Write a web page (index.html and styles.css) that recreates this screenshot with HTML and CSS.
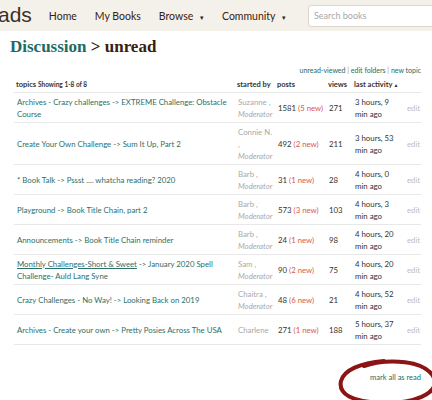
FILE: index.html
```html
<!DOCTYPE html>
<html lang="en">

<head>
    <meta charset="UTF-8">
    <meta name="viewport" content="width=device-width, initial-scale=1.0">
    <title>Discussion &gt; unread</title>
    <link rel="stylesheet" href="styles.css">
</head>

<body>
    <div id="topbar">
        <span class="logo">ads</span>
        <div id="menu">
            <a class="menuItem">Home</a>
            <a class="menuItem">My Books</a>
            <a class="menuItem">Browse <span class="caret">&#9662;</span></a>
            <a class="menuItem">Community <span class="caret">&#9662;</span></a>
        </div>
        <div class="search">Search books</div>
    </div>

    <div id="content">
        <h1 class="pageTitle"><a>Discussion</a> &gt; unread</h1>
        <div class="actions">
            <a>unread-viewed</a> | <a>edit folders</a> | <a>new topic</a>
        </div>

        <table class="topicTable">
            <colgroup>
                <col class="cTopic">
                <col class="cStarted">
                <col class="cPosts">
                <col class="cViews">
                <col class="cActivity">
                <col class="cEdit">
            </colgroup>
            <thead>
                <tr>
                    <th>topics <span class="showing">Showing 1-8 of 8</span></th>
                    <th>started by</th>
                    <th>posts</th>
                    <th>views</th>
                    <th>last activity<span class="sortArrow">&#9650;</span></th>
                    <th></th>
                </tr>
            </thead>
            <tbody>
                <tr>
                    <td><a class="topic">Archives - Crazy challenges -&gt; EXTREME Challenge: Obstacle Course</a></td>
                    <td class="author">Suzanne , <i>Moderator</i></td>
                    <td class="posts">1581 <span class="new">(5 new)</span></td>
                    <td>271</td>
                    <td class="activity">3 hours, 9 min ago</td>
                    <td class="edit">edit</td>
                </tr>
                <tr>
                    <td><a class="topic">Create Your Own Challenge -&gt; Sum It Up, Part 2</a></td>
                    <td class="author">Connie N. , <i>Moderator</i></td>
                    <td class="posts">492 <span class="new">(2 new)</span></td>
                    <td>211</td>
                    <td class="activity">3 hours, 53 min ago</td>
                    <td class="edit">edit</td>
                </tr>
                <tr>
                    <td><a class="topic">* Book Talk -&gt; Pssst .... whatcha reading? 2020</a></td>
                    <td class="author">Barb , <i>Moderator</i></td>
                    <td class="posts">31 <span class="new">(1 new)</span></td>
                    <td>28</td>
                    <td class="activity">4 hours, 0 min ago</td>
                    <td class="edit">edit</td>
                </tr>
                <tr>
                    <td><a class="topic">Playground -&gt; Book Title Chain, part 2</a></td>
                    <td class="author">Barb , <i>Moderator</i></td>
                    <td class="posts">573 <span class="new">(3 new)</span></td>
                    <td>103</td>
                    <td class="activity">4 hours, 3 min ago</td>
                    <td class="edit">edit</td>
                </tr>
                <tr>
                    <td><a class="topic">Announcements -&gt; Book Title Chain reminder</a></td>
                    <td class="author">Barb , <i>Moderator</i></td>
                    <td class="posts">24 <span class="new">(1 new)</span></td>
                    <td>98</td>
                    <td class="activity">4 hours, 20 min ago</td>
                    <td class="edit">edit</td>
                </tr>
                <tr>
                    <td><a class="topic"><u>Monthly Challenges-Short &amp; Sweet</u> -&gt; January 2020 Spell Challenge- Auld Lang Syne</a></td>
                    <td class="author">Sam , <i>Moderator</i></td>
                    <td class="posts">90 <span class="new">(2 new)</span></td>
                    <td>75</td>
                    <td class="activity">4 hours, 20 min ago</td>
                    <td class="edit">edit</td>
                </tr>
                <tr>
                    <td><a class="topic">Crazy Challenges - No Way! -&gt; Looking Back on 2019</a></td>
                    <td class="author">Chaitra , <i>Moderator</i></td>
                    <td class="posts">48 <span class="new">(6 new)</span></td>
                    <td>21</td>
                    <td class="activity">4 hours, 52 min ago</td>
                    <td class="edit">edit</td>
                </tr>
                <tr>
                    <td><a class="topic">Archives - Create your own -&gt; Pretty Posies Across The USA</a></td>
                    <td class="author">Charlene</td>
                    <td class="posts">271 <span class="new">(1 new)</span></td>
                    <td>188</td>
                    <td class="activity">5 hours, 37 min ago</td>
                    <td class="edit">edit</td>
                </tr>
            </tbody>
        </table>

        <div class="markAll"><a>mark all as read</a></div>

        <!-- red marker circle drawn over the page -->
        <svg class="scribble" width="102" height="50" viewBox="0 0 102 50">
            <path d="M34 10 C58 2 96 4 104 22 C110 38 82 48 52 47 C22 46 8 38 11 25 C14 14 30 7 54 5"
                fill="none" stroke="#8c1414" stroke-width="4" stroke-linecap="round" />
        </svg>
    </div>
</body>

</html>
```
FILE: styles.css
```css
* {
    margin: 0;
    padding: 0;
    box-sizing: border-box;
}

body {
    background-color: #fff;
    font-family: Lato, "Open Sans", sans-serif;
    color: #333;
    overflow: hidden;
}

a {
    color: #1e6b64;
    text-decoration: none;
}

#topbar {
    height: 31px;
    background-color: #f4f1ea;
    display: flex;
    align-items: center;
}

.logo {
    font-family: "Liberation Sans", Arial, sans-serif;
    font-size: 21px;
    color: #3b3128;
    margin-left: -2px;
    margin-top: -2px;
}

#menu {
    display: flex;
    gap: 18px;
    margin-left: 17px;
}

.menuItem {
    font-size: 10.5px;
    color: #382110;
}

.caret {
    font-size: 7px;
    margin-left: 4px;
}

.search {
    margin-left: auto;
    width: 128px;
    height: 22px;
    margin-right: -4px;
    background-color: #fff;
    border: 1px solid #dcd6cc;
    border-radius: 3px;
    font-size: 9px;
    color: #a8a8a8;
    line-height: 20px;
    padding-left: 5px;
}

#content {
    position: relative;
    height: 369px;
}

.pageTitle {
    font-family: "Liberation Serif", "Times New Roman", serif;
    font-size: 17px;
    line-height: 20px;
    color: #382110;
    margin: 6px 0 0 10px;
}

.pageTitle a {
    color: #1e6b64;
}

.actions {
    text-align: right;
    font-size: 7px;
    line-height: 10px;
    color: #999;
    width: 421px;
    margin-top: 8px;
}

.topicTable {
    border-collapse: collapse;
    table-layout: fixed;
    width: 407px;
    margin: 4px 0 0 14px;
    font-size: 7.8px;
    line-height: 12px;
}

.cTopic { width: 221px; }
.cStarted { width: 40px; }
.cPosts { width: 51px; }
.cViews { width: 26px; }
.cActivity { width: 52px; }
.cEdit { width: 17px; }

.topicTable th {
    text-align: left;
    font-weight: bold;
    font-size: 7.5px;
    color: #333;
    padding: 0 0 1px 2px;
    border-bottom: 1px solid #e8e8e8;
    white-space: nowrap;
}

.showing {
    font-size: 6.5px;
}

.sortArrow {
    font-size: 5px;
    margin-left: 1px;
}

.topicTable td {
    padding: 2.5px 2px 2.5px 3px;
    border-bottom: 1px solid #e8e8e8;
    vertical-align: middle;
    color: #333;
}

.topic {
    color: #2c6f69;
}

.topicTable td.author {
    color: #a9a9a9;
    padding-right: 1px;
}

.topicTable td.activity {
    padding-right: 6px;
}

.topicTable td.edit {
    color: #bdbdbd;
    padding-left: 3px;
}

.new {
    color: #d9574c;
}

.markAll {
    text-align: right;
    width: 421px;
    font-size: 7.5px;
    margin-top: 28px;
}

.scribble {
    position: absolute;
    left: 330px;
    top: 319px;
}
```
